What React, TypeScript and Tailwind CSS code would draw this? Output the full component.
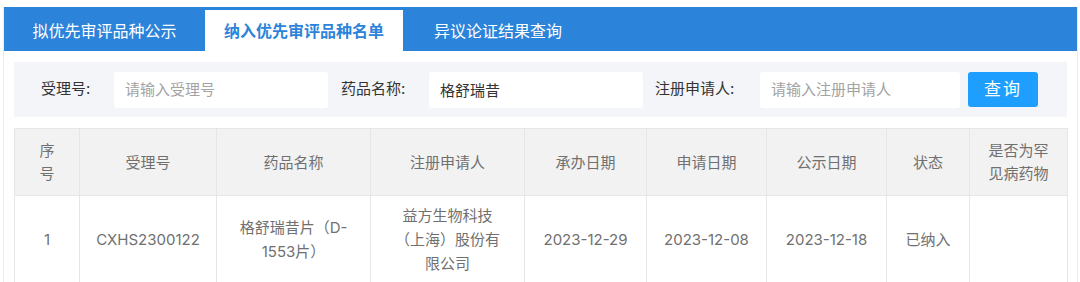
import { useState } from 'react';

const tabs = ['拟优先审评品种公示', '纳入优先审评品种名单', '异议论证结果查询'];
const tabWidths = ['w-[201px]', 'w-[198px]', 'w-[190px]'];

const cols = [
  { title: '序号', w: 'w-[65px]' },
  { title: '受理号', w: 'w-[137px]' },
  { title: '药品名称', w: 'w-[154px]' },
  { title: '注册申请人', w: 'w-[154px]' },
  { title: '承办日期', w: 'w-[122px]' },
  { title: '申请日期', w: 'w-[120px]' },
  { title: '公示日期', w: 'w-[120px]' },
  { title: '状态', w: 'w-[83px]' },
  { title: '是否为罕见病药物', w: 'w-[98px]' },
];

// each cell is a list of lines, as they wrap in the original page
const rows = [
  [['1'], ['CXHS2300122'], ['格舒瑞昔片（D-', '1553片）'], ['益方生物科技', '（上海）股份有', '限公司'], ['2023-12-29'], ['2023-12-08'], ['2023-12-18'], ['已纳入'], []],
];

export default function App() {
  const [active, setActive] = useState(1);
  const [form, setForm] = useState({ acceptNo: '', drugName: '格舒瑞昔', applicant: '' });

  return (
    <div className="w-[1080px] h-[282px] bg-white overflow-hidden pt-[7px] pl-[3px] pr-[2px] font-['Inter','Noto_Sans_CJK_SC',sans-serif]">
      <div className="border-x border-[#e9edf2] h-full">
        <div className="flex items-end h-[44px] bg-[#2b83da]">
          {tabs.map((t, i) => (
            <button
              key={t}
              onClick={() => setActive(i)}
              className={`${tabWidths[i]} h-[41px] text-[16px] ${active === i ? 'bg-white text-[#2b83da] font-bold' : 'text-white'}`}
            >
              {t}
            </button>
          ))}
        </div>

        <div className="px-[10px] pt-[11px]">
          <div className="flex items-center h-[55px] bg-[#f3f5f8] text-[15px] text-[#333]">
            <label className="ml-[27px] w-[54px] whitespace-nowrap">受理号:</label>
            <input
              placeholder="请输入受理号"
              value={form.acceptNo}
              onChange={e => setForm({ ...form, acceptNo: e.target.value })}
              className="ml-[19px] w-[214px] h-[36px] bg-white rounded-[3px] px-[11px] outline-none placeholder:text-[#a3a3a3]"
            />
            <label className="ml-[13px] w-[67px] whitespace-nowrap">药品名称:</label>
            <input
              placeholder="请输入药品名称"
              value={form.drugName}
              onChange={e => setForm({ ...form, drugName: e.target.value })}
              className="ml-[21px] w-[214px] h-[36px] bg-white rounded-[3px] px-[11px] outline-none placeholder:text-[#a3a3a3]"
            />
            <label className="ml-[12px] w-[87px] whitespace-nowrap">注册申请人:</label>
            <input
              placeholder="请输入注册申请人"
              value={form.applicant}
              onChange={e => setForm({ ...form, applicant: e.target.value })}
              className="ml-[18px] w-[200px] h-[36px] bg-white rounded-[3px] px-[11px] outline-none placeholder:text-[#a3a3a3]"
            />
            <button className="ml-[8px] w-[70px] h-[35px] rounded-[3px] bg-[#1e9fff] text-white text-[17px] tracking-[2px]">查询</button>
          </div>

          <table className="mt-[11px] w-[1053px] table-fixed border-collapse text-[15px] text-[#707070] text-center">
            <colgroup>
              {cols.map(c => <col key={c.title} className={c.w} />)}
            </colgroup>
            <thead className="bg-[#f2f2f2]">
              <tr>
                {cols.map(c => (
                  <th key={c.title} className="border border-[#e6e6e6] font-normal px-[18px] py-[10px] leading-[23px]">{c.title}</th>
                ))}
              </tr>
            </thead>
            <tbody>
              {rows.map((r, i) => (
                <tr key={i}>
                  {r.map((lines, j) => (
                    <td key={j} className="border border-[#e6e6e6] px-[6px] py-[8px] leading-[24px] whitespace-nowrap">
                      {lines.map((l, k) => <div key={k}>{l}</div>)}
                    </td>
                  ))}
                </tr>
              ))}
            </tbody>
          </table>
        </div>
      </div>
    </div>
  );
}
